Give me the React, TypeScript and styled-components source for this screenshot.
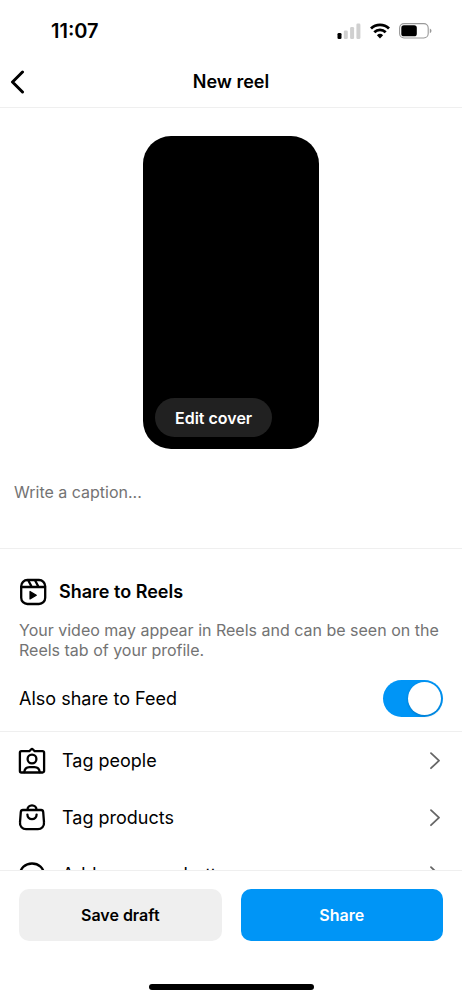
import React from "react";
import styled, { createGlobalStyle } from "styled-components";

const GlobalStyle = createGlobalStyle`
  *, *::before, *::after { box-sizing: border-box; }
  body {
    margin: 0;
    background: #fff;
    color: #000;
    font-family: Inter, "Liberation Sans", sans-serif;
    font-size: 16px;
    line-height: 20px;
  }
  button, input, textarea { font: inherit; color: inherit; }
  button { border: 0; padding: 0; background: none; cursor: pointer; }
  h1, h2, p { margin: 0; }
`;

const Screen = styled.div`
  display: flex;
  flex-direction: column;
  height: 100vh;
  overflow: hidden;
`;

const StatusBar = styled.div`
  display: flex;
  flex: none;
  align-items: center;
  justify-content: space-between;
  height: 56px;
  padding: 6px 30px 0 51px;
`;

const Clock = styled.time`
  font-size: 20px;
  font-weight: 600;
`;

const StatusIcons = styled.div`
  display: flex;
  align-items: center;
  gap: 9px;
`;

const NavBar = styled.header`
  display: grid;
  flex: none;
  grid-template-columns: 48px 1fr 48px;
  align-items: center;
  height: 52px;
  border-bottom: 1px solid #efefef;
`;

const BackButton = styled.button`
  display: flex;
  padding-left: 10px;
`;

const Title = styled.h1`
  font-size: 18px;
  font-weight: 600;
  text-align: center;
`;

const Content = styled.main`
  flex: 1;
  min-height: 0;
  overflow: hidden;
`;

const Composer = styled.section`
  border-bottom: 1px solid #efefef;
  padding: 28px 14px 10px;
`;

const Cover = styled.div`
  display: flex;
  align-items: flex-end;
  width: 176px;
  height: 313px;
  margin: 0 auto 33px;
  padding: 12px;
  border-radius: 28px;
  background: #000;
`;

const EditCover = styled.button`
  height: 39px;
  padding: 0 20px;
  border-radius: 20px;
  background: #212121;
  color: #fff;
  font-weight: 600;
`;

const Caption = styled.textarea`
  display: block;
  width: 100%;
  height: 56px;
  padding: 0;
  border: 0;
  outline: 0;
  resize: none;
  background: none;
  &::placeholder { color: #737373; opacity: 1; }
`;

const ShareSection = styled.section`
  padding: 29px 19px 14px;
  border-bottom: 1px solid #efefef;
`;

const SectionTitle = styled.h2`
  display: flex;
  align-items: center;
  gap: 12px;
  height: 28px;
  font-size: 18px;
  font-weight: 600;
`;

const Description = styled.p`
  margin: 14px 0 20px;
  color: #737373;
`;

const ToggleRow = styled.label`
  display: flex;
  align-items: center;
  justify-content: space-between;
  font-size: 18px;
`;

const Switch = styled.input`
  appearance: none;
  display: flex;
  align-items: center;
  width: 60px;
  height: 37px;
  margin: 0;
  padding: 2px;
  border-radius: 19px;
  background: #dbdbdb;
  cursor: pointer;
  &::before {
    content: "";
    width: 33px;
    height: 33px;
    border-radius: 50%;
    background: #fff;
    box-shadow: 0 1px 3px rgba(0, 0, 0, 0.2);
  }
  &:checked { justify-content: flex-end; background: #0095f6; }
`;

const OptionRow = styled.button`
  display: flex;
  align-items: center;
  gap: 16px;
  width: 100%;
  height: 57px;
  padding: 0 22px 0 18px;
  font-size: 18px;
  text-align: left;
`;

const OptionLabel = styled.span`
  flex: 1;
`;

const Footer = styled.footer`
  flex: none;
  border-top: 1px solid #efefef;
  padding: 18px 19px 10px;
`;

const Actions = styled.div`
  display: grid;
  grid-template-columns: 1fr 1fr;
  gap: 19px;
`;

const ActionButton = styled.button<{ $primary?: boolean }>`
  height: 52px;
  border-radius: 10px;
  background: ${(p) => (p.$primary ? "#0095f6" : "#efefef")};
  color: ${(p) => (p.$primary ? "#fff" : "#000")};
  font-weight: 600;
`;

const HomeIndicator = styled.div`
  width: 165px;
  height: 6px;
  margin: 43px auto 0;
  border-radius: 3px;
  background: #000;
`;

const SignalIcon = () => (
  <svg width="24" height="16" viewBox="0 0 24 16" aria-hidden="true">
    <rect x="0.5" y="10" width="4" height="6" rx="1.3" fill="#000" />
    <g fill="#d0d0d0">
      <rect x="6.8" y="7.5" width="4" height="8.5" rx="1.3" />
      <rect x="13.1" y="4" width="4" height="12" rx="1.3" />
      <rect x="19.4" y="0.5" width="4" height="15.5" rx="1.3" />
    </g>
  </svg>
);

const WifiIcon = () => (
  <svg width="20" height="16" viewBox="0 0 20 16" fill="none" stroke="#000" strokeWidth="2.8" aria-hidden="true">
    <path d="M1 5.4a13 13 0 0 1 18 0" />
    <path d="M4.3 9.2a8.2 8.2 0 0 1 11.4 0" />
    <path d="M6.9 12.2a4.5 4.5 0 0 1 6.2 0L10 15.4z" fill="#000" stroke="none" />
  </svg>
);

const BatteryIcon = () => (
  <svg width="33" height="16" viewBox="0 0 33 16" aria-hidden="true">
    <rect x="0.6" y="0.6" width="28.6" height="14.4" rx="4.4" fill="none" stroke="#999" strokeWidth="1.1" />
    <rect x="2.3" y="2.3" width="15.5" height="11" rx="2.6" fill="#000" />
    <path d="M30.8 5.6c2.2.8 2.2 3.8 0 4.6z" fill="#999" />
  </svg>
);

const BackIcon = () => (
  <svg width="16" height="24" viewBox="0 0 16 24" fill="none" stroke="#000" strokeWidth="3" strokeLinecap="round" strokeLinejoin="round" aria-hidden="true">
    <path d="M12.5 2 2.5 12l10 10" />
  </svg>
);

const ChevronIcon = () => (
  <svg width="10" height="18" viewBox="0 0 10 18" fill="none" stroke="#666" strokeWidth="1.8" strokeLinecap="round" strokeLinejoin="round" aria-hidden="true">
    <path d="M1 1.2 9 8.7l-8 7.5" />
  </svg>
);

const LineIcon = styled.svg.attrs({
  width: 28,
  height: 28,
  viewBox: "0 0 28 28",
  fill: "none",
  stroke: "#000",
  strokeWidth: 2.3,
  strokeLinecap: "round",
  strokeLinejoin: "round",
  "aria-hidden": true,
})`
  flex: none;
`;

const ReelsIcon = () => (
  <LineIcon>
    <rect x="2.2" y="2" width="24" height="24" rx="6.2" />
    <path d="M2.4 9h23.6M9.2 2.3 12.8 9M16 2.2 19.6 9" />
    <path d="M11 13.5v7.4l6.3-3.7z" fill="#000" strokeWidth="1.2" />
  </LineIcon>
);

const PersonIcon = () => (
  <LineIcon>
    <path d="M3.4 4.2h7.9L13 2.5a1.5 1.5 0 0 1 2 0l1.7 1.7h7.9a1.5 1.5 0 0 1 1.5 1.5V24a1.5 1.5 0 0 1-1.5 1.5H3.4A1.5 1.5 0 0 1 1.9 24V5.7a1.5 1.5 0 0 1 1.5-1.5z" />
    <circle cx="14" cy="12" r="4.4" />
    <path d="M6.3 25.2c.3-3.400 2.300-5 5.200-5h5c2.900 0 4.900 1.600 5.200 5" />
  </LineIcon>
);

const BagIcon = () => (
  <LineIcon>
    <path d="M5 6h18a2.200 2.200 0 0 1 2.200 2l.8 10.400a6.100 6.100 0 0 1-6.100 6.800H8.100A6.100 6.100 0 0 1 2 18.400L2.800 8A2.200 2.200 0 0 1 5 6z" />
    <path d="M9.500 5.800a4.500 4.500 0 0 1 9 0" />
    <path d="M9.400 10.600a4.600 4.600 0 0 0 9.200 0" />
  </LineIcon>
);

const MessageIcon = () => (
  <LineIcon>
    <path d="M14 2.500C7.300 2.500 2 7.300 2 13.800c0 3.500 1.500 6.500 4 8.600l.1 3.800 3.600-1.500c1.300.4 2.800.6 4.300.6 6.700 0 12-4.900 12-11.500S20.700 2.500 14 2.500z" />
    <path d="m7 16 4.500-4.500 4.500 3.500 5-4.500" />
  </LineIcon>
);

const options = [
  { label: "Tag people", Icon: PersonIcon },
  { label: "Tag products", Icon: BagIcon },
  { label: "Add message button", Icon: MessageIcon },
];

export default function App() {
  return (
    <>
      <GlobalStyle />
      <Screen>
        <StatusBar>
          <Clock>11:07</Clock>
          <StatusIcons>
            <SignalIcon />
            <WifiIcon />
            <BatteryIcon />
          </StatusIcons>
        </StatusBar>
        <NavBar>
          <BackButton type="button" aria-label="Back">
            <BackIcon />
          </BackButton>
          <Title>New reel</Title>
        </NavBar>
        <Content>
          <Composer>
            <Cover>
              <EditCover type="button">Edit cover</EditCover>
            </Cover>
            <Caption aria-label="Caption" placeholder="Write a caption..." />
          </Composer>
          <ShareSection>
            <SectionTitle>
              <ReelsIcon />
              Share to Reels
            </SectionTitle>
            <Description>
              Your video may appear in Reels and can be seen on the Reels tab of your profile.
            </Description>
            <ToggleRow>
              Also share to Feed
              <Switch type="checkbox" role="switch" defaultChecked />
            </ToggleRow>
          </ShareSection>
          {options.map(({ label, Icon }) => (
            <OptionRow key={label} type="button">
              <Icon />
              <OptionLabel>{label}</OptionLabel>
              <ChevronIcon />
            </OptionRow>
          ))}
        </Content>
        <Footer>
          <Actions>
            <ActionButton type="button">Save draft</ActionButton>
            <ActionButton type="button" $primary>
              Share
            </ActionButton>
          </Actions>
          <HomeIndicator />
        </Footer>
      </Screen>
    </>
  );
}
